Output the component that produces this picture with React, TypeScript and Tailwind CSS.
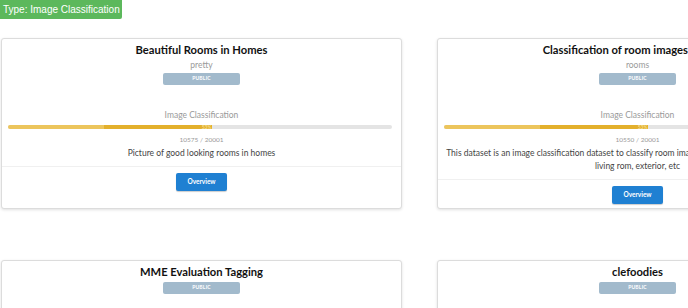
import React from 'react';

type Dataset = {
  name: string;
  tag?: string;
  task?: string;
  done?: number;
  total?: number;
  description?: string;
};

const datasets: Dataset[] = [
  {
    name: 'Beautiful Rooms in Homes',
    tag: 'pretty',
    task: 'Image Classification',
    done: 10575,
    total: 20001,
    description: 'Picture of good looking rooms in homes',
  },
  {
    name: 'Classification of room images datasets',
    tag: 'rooms',
    task: 'Image Classification',
    done: 10550,
    total: 20001,
    description:
      'This dataset is an image classification dataset to classify room images into bedroom, kitchen, bathroom, living rom, exterior, etc',
  },
  { name: 'MME Evaluation Tagging' },
  { name: 'clefoodies' },
];

function Progress({ done, total }: { done: number; total: number }) {
  const pct = Math.round((done / total) * 100);
  return (
    <div className="mx-[6px] mt-[5px] flex h-[4px] w-[384px] overflow-hidden rounded-full bg-[#e4e4e4]">
      <div className="h-full w-1/4 bg-[#ecc55c]" />
      <div className="relative h-full bg-[#e3b02c]" style={{ width: `${pct - 25}%` }}>
        <span className="absolute right-0 top-[-1px] text-[5px] leading-[6px] text-[#f6e3a8]">{pct}%</span>
      </div>
    </div>
  );
}

function Card({ d }: { d: Dataset }) {
  return (
    <div className="flex h-[171px] w-[401px] shrink-0 flex-col rounded-[3px] border border-[#dcdcdc] bg-white shadow-[0_1px_3px_rgba(0,0,0,0.12)]">
      <div className="flex flex-col items-center pt-[4px]">
        <div className="whitespace-nowrap text-[11.2px] font-bold leading-[14px] text-[#111]">{d.name}</div>
        {d.tag && <div className="mt-[2px] text-[8.5px] leading-[12px] text-[#9a9a9a]">{d.tag}</div>}
        <div className={`${d.tag ? 'mt-[2px]' : 'mt-[3px]'} flex h-[12px] w-[77px] items-center justify-center rounded-[2px] bg-[#a2bacc] text-[5px] font-bold tracking-[0.2px] text-white`}>
          PUBLIC
        </div>
      </div>
      {d.task && (
        <>
          <div className="mt-[25px] text-center text-[8.5px] leading-[10px] text-[#9a9a9a]">{d.task}</div>
          <Progress done={d.done!} total={d.total!} />
          <div className="mt-[6px] text-center text-[6.5px] leading-[10px] text-[#999]">
            {d.done} / {d.total}
          </div>
          <div className="mt-[2px] px-[8px] text-center text-[8.5px] leading-[13px] text-[#444]">{d.description}</div>
          <div className="mt-[6px] flex justify-center border-t border-[#f0f0f0] pt-[6px]">
            <button className="h-[18px] w-[51px] rounded-[2px] bg-[#1f80d2] text-[6.5px] font-bold text-white shadow-[0_1px_1px_rgba(0,0,0,0.2)]">
              Overview
            </button>
          </div>
        </>
      )}
    </div>
  );
}

export default function App() {
  return (
    <div className="h-[308px] w-[688px] overflow-hidden bg-white font-['Lato',sans-serif]">
      <button className="flex h-[19px] w-[122px] items-center gap-[3px] whitespace-nowrap rounded-br-[2px] bg-[#5cb85c] pl-[3px] font-['Liberation_Sans',Arial,sans-serif] text-[10px] text-white">
        Type: Image Classification
        <span className="mt-[1px] border-x-[2.5px] border-t-[3px] border-x-transparent border-t-white" />
      </button>
      <div className="mt-[19px] grid grid-cols-[401px_401px] gap-x-[35px] gap-y-[51px] pl-px">
        {datasets.map((d) => (
          <Card key={d.name} d={d} />
        ))}
      </div>
    </div>
  );
}
